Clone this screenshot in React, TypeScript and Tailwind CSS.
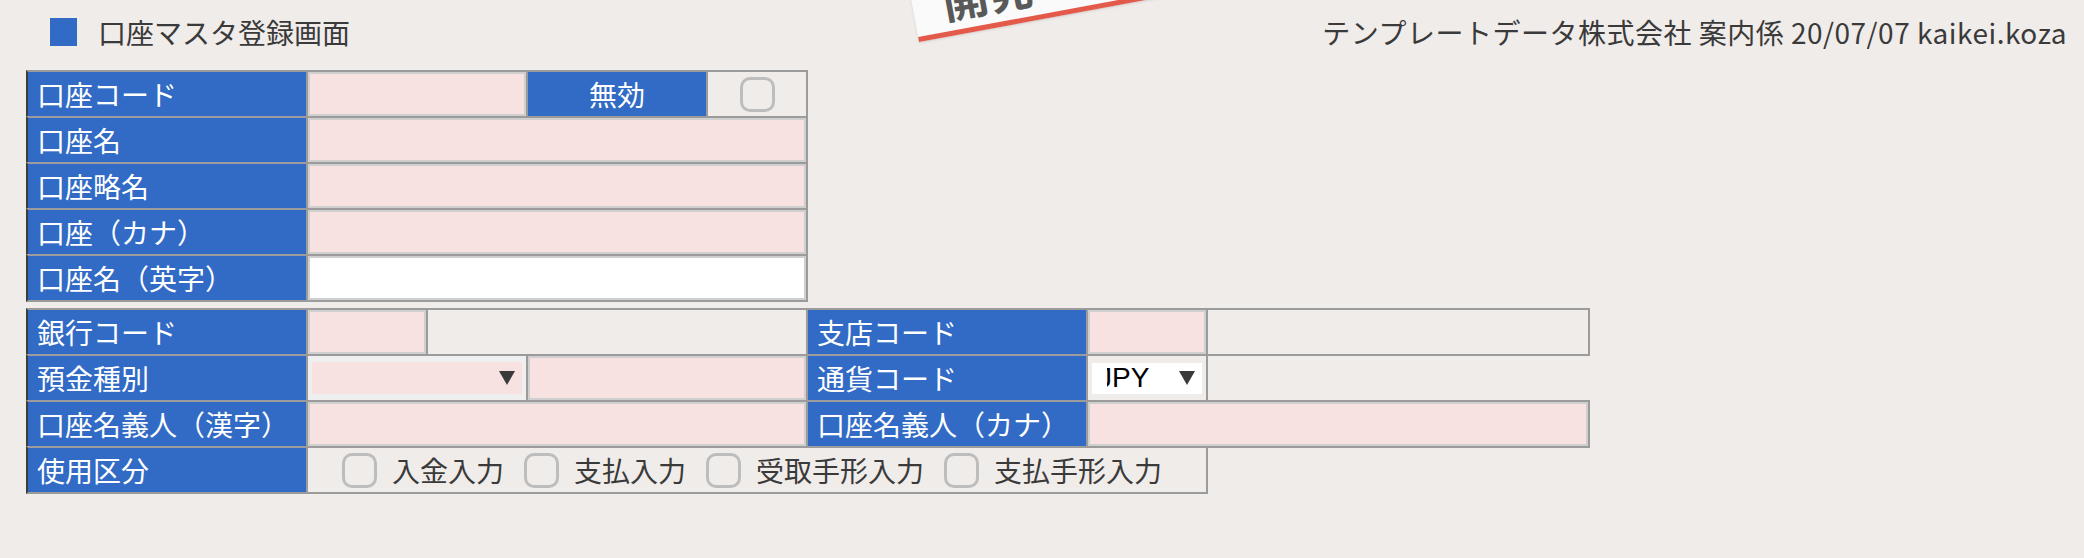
import type { ReactNode } from 'react'

// ── Small parts ───────────────────────────────────────────────────────────────

function Cell({ w, first, className = '', children }: { w: string; first?: boolean; className?: string; children?: ReactNode }) {
  return (
    <div
      className={`${w} h-[48px] shrink-0 border-2 border-[#9b9b9b] ${first ? 'border-l-[#3d3d3d]' : '-ml-[2px]'} ${className}`}
    >
      {children}
    </div>
  )
}

function Label({ text, w = 'w-[282px]', first, center }: { text: string; w?: string; first?: boolean; center?: boolean }) {
  return (
    <Cell w={w} first={first} className="bg-[#316bc5]">
      <div className={`flex h-full items-center text-[28px] leading-none text-white ${center ? 'justify-center' : 'pl-[9px]'}`}>
        {text}
      </div>
    </Cell>
  )
}

function TextInput({ w, white }: { w: string; white?: boolean }) {
  return (
    <Cell w={w}>
      <div className={`h-full w-full border-2 border-[#cfcfcf] ${white ? 'bg-white' : 'bg-[#f8e1e1]'}`} />
    </Cell>
  )
}

function Arrow() {
  return (
    <svg width="16" height="14" viewBox="0 0 16 14" className="shrink-0">
      <path d="M0 0 H16 L8 14 Z" fill="#3a3a3a" />
    </svg>
  )
}

function CheckBox() {
  return <div className="h-[35px] w-[35px] shrink-0 rounded-[10px] border-[3px] border-[#bdbdbd]" />
}

function Row({ first, children }: { first?: boolean; children: ReactNode }) {
  return <div className={`flex ${first ? '' : '-mt-[2px]'}`}>{children}</div>
}

const usage = ['入金入力', '支払入力', '受取手形入力', '支払手形入力']

// ── Main component ────────────────────────────────────────────────────────────

export default function App() {
  return (
    <div className="relative min-h-screen w-full overflow-hidden bg-[#f0ecea] font-['Noto_Sans_CJK_JP',sans-serif] text-[#3a3a3a]">
      {/* Stamp */}
      <div className="absolute left-[919px] top-[-58px] h-[100px] w-[290px] origin-bottom-left rotate-[-10.5deg] border-b-[5px] border-[#e45a4a] bg-[#fafafa] shadow-sm">
        <div className="flex h-full items-end pb-[9px] pl-[30px] text-[46px] font-semibold leading-none text-[#595959]">開発</div>
      </div>

      {/* Header */}
      <div className="flex h-[64px] items-center justify-between pl-[50px] pr-[17px]">
        <div className="flex items-center gap-[21px]">
          <div className="h-[28px] w-[27px] bg-[#316bc5]" />
          <span className="text-[28px] leading-none">口座マスタ登録画面</span>
        </div>
        <span className="text-[28px] leading-none tracking-[0.5px]">テンプレートデータ株式会社 案内係 20/07/07 kaikei.koza</span>
      </div>

      <div className="mt-[6px] pl-[26px]">
        {/* Account block */}
        <div className="flex flex-col">
          <Row first>
            <Label text="口座コード" first />
            <TextInput w="w-[222px]" />
            <Label text="無効" w="w-[182px]" center />
            <Cell w="w-[102px]">
              <div className="flex h-full items-center justify-center">
                <CheckBox />
              </div>
            </Cell>
          </Row>
          <Row>
            <Label text="口座名" first />
            <TextInput w="w-[502px]" />
          </Row>
          <Row>
            <Label text="口座略名" first />
            <TextInput w="w-[502px]" />
          </Row>
          <Row>
            <Label text="口座（カナ）" first />
            <TextInput w="w-[502px]" />
          </Row>
          <Row>
            <Label text="口座名（英字）" first />
            <TextInput w="w-[502px]" white />
          </Row>
        </div>

        {/* Bank block */}
        <div className="mt-[6px] flex flex-col">
          <Row first>
            <Label text="銀行コード" first />
            <TextInput w="w-[122px]" />
            <Cell w="w-[382px]" />
            <Label text="支店コード" />
            <TextInput w="w-[122px]" />
            <Cell w="w-[384px]" />
          </Row>
          <Row>
            <Label text="預金種別" first />
            <Cell w="w-[222px]" className="bg-[#efefef]">
              <div className="flex h-full items-center px-[4px]">
                <div className="flex h-[32px] w-full items-center justify-end bg-[#f8e1e1] pr-[7px]">
                  <Arrow />
                </div>
              </div>
            </Cell>
            <TextInput w="w-[282px]" />
            <Label text="通貨コード" />
            <Cell w="w-[122px]">
              <div className="flex h-full items-center px-[4px]">
                <div className="flex h-[31px] w-full items-center bg-white pr-[7px]">
                  <span className="ml-[15px] flex-1 overflow-hidden font-['Liberation_Sans',Arial,sans-serif] text-[28px] leading-none text-black">
                    <span className="-ml-[9px]">JPY</span>
                  </span>
                  <Arrow />
                </div>
              </div>
            </Cell>
          </Row>
          <Row>
            <Label text="口座名義人（漢字）" first />
            <TextInput w="w-[502px]" />
            <Label text="口座名義人（カナ）" />
            <TextInput w="w-[504px]" />
          </Row>
          <Row>
            <Label text="使用区分" first />
            <Cell w="w-[902px]">
              <div className="flex h-full items-center gap-[20px] pl-[34px]">
                {usage.map((u) => (
                  <div key={u} className="flex items-center gap-[15px]">
                    <CheckBox />
                    <span className="text-[28px] leading-none">{u}</span>
                  </div>
                ))}
              </div>
            </Cell>
          </Row>
        </div>
      </div>
    </div>
  )
}
